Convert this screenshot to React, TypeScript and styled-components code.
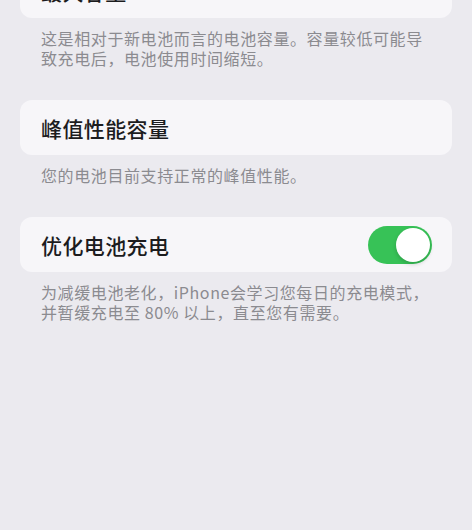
import React from 'react';
import styled, { createGlobalStyle } from 'styled-components';

const GlobalStyle = createGlobalStyle`
  html, body {
    margin: 0;
    padding: 0;
    background: #ebeaef;
    overflow: hidden;
  }

  body {
    font-family: "Noto Sans CJK SC", "Noto Sans", sans-serif;
    -webkit-font-smoothing: antialiased;
  }
`;

const Page = styled.div`
  width: 472px;
  height: 530px;
  box-sizing: border-box;
  padding: 0 20px;
  background: #ebeaef;
`;

// the list is scrolled, so the first group sits partly above the top edge
const List = styled.div`
  display: flex;
  flex-direction: column;
  margin-top: -37px;
`;

const Group = styled.section`
  display: flex;
  flex-direction: column;
  margin-bottom: 32px;
`;

const Card = styled.div`
  display: flex;
  align-items: center;
  justify-content: space-between;
  height: 55px;
  padding: 0 20px 0 21px;
  background: #f7f6f9;
  border-radius: 12px;
`;

const Title = styled.span`
  font-size: 21px;
  line-height: 28px;
  letter-spacing: 0.4px;
  font-weight: 500;
  color: #1c1c1e;
`;

const Value = styled.span`
  font-size: 21px;
  line-height: 28px;
  color: #8e8e93;
`;

const Footnote = styled.p`
  margin: 10px 0 0;
  padding: 0 21px;
  font-size: 16px;
  line-height: 20px;
  letter-spacing: 0.6px;
  color: #8b8b90;
`;

const Switch = styled.span<{ $on: boolean }>`
  display: flex;
  align-items: center;
  justify-content: ${p => (p.$on ? 'flex-end' : 'flex-start')};
  width: 64px;
  height: 38px;
  padding: 2px;
  box-sizing: border-box;
  border-radius: 19px;
  background: ${p => (p.$on ? '#37c257' : '#e3e3e8')};
`;

const Knob = styled.span`
  width: 34px;
  height: 34px;
  border-radius: 50%;
  background: #ffffff;
  box-shadow: 0 2px 4px rgba(0, 0, 0, 0.18);
`;

export default function App() {
  return (
    <Page>
      <GlobalStyle />
      <List>
        <Group>
          <Card>
            <Title>最大容量</Title>
            <Value>100%</Value>
          </Card>
          <Footnote>这是相对于新电池而言的电池容量。容量较低可能导致充电后，电池使用时间缩短。</Footnote>
        </Group>
        <Group>
          <Card>
            <Title>峰值性能容量</Title>
          </Card>
          <Footnote>您的电池目前支持正常的峰值性能。</Footnote>
        </Group>
        <Group>
          <Card>
            <Title>优化电池充电</Title>
            <Switch $on={true}>
              <Knob />
            </Switch>
          </Card>
          <Footnote>
            为减缓电池老化，iPhone会学习您每日的充电模式，并暂缓充电至 80% 以上，直至您有需要。
          </Footnote>
        </Group>
      </List>
    </Page>
  );
}
